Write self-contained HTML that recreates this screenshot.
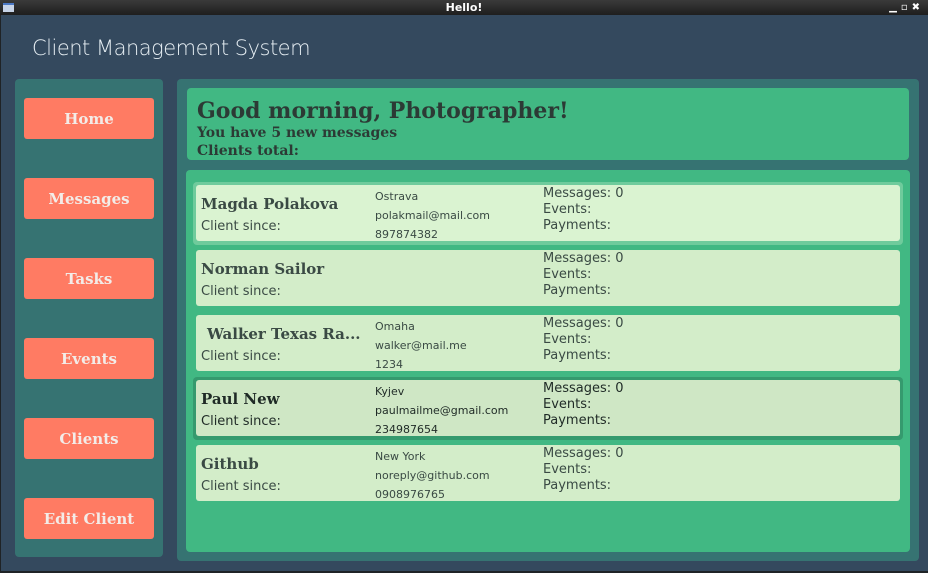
<!DOCTYPE html>
<html><head><meta charset="utf-8"><style>
*{margin:0;padding:0;box-sizing:border-box}
body{width:928px;height:573px;background:#1f2326;position:relative;overflow:hidden;font-family:"DejaVu Sans","Liberation Sans",sans-serif}
.abs{position:absolute}
#tb{left:0;top:0;width:928px;height:15px;background:linear-gradient(#3a3a3a,#1e1e1e);color:#fff;font:bold 11px "DejaVu Sans",sans-serif;text-align:center;line-height:15px}
#win{left:1px;top:15px;width:927px;height:556px;background:#34495e}
#title{left:32px;top:36px;color:#e6eef3;font:21px "DejaVu Sans","Liberation Sans",sans-serif;font-weight:200;letter-spacing:-0.5px}
#side{left:15px;top:79px;width:148px;height:478px;background:#367372;border-radius:4px}
.btn{position:absolute;left:24px;width:130px;height:41px;background:#ff7b63;border-radius:3px;color:#f3ece8;font:bold 15px "DejaVu Serif","Liberation Serif",serif;text-align:center;line-height:43px}
#main{left:177px;top:79px;width:742px;height:482px;background:#367372;border-radius:4px}
#hdr{left:187px;top:88px;width:722px;height:72px;background:#41b883;border-radius:4px;color:#2c3a35;font-family:"DejaVu Serif","Liberation Serif",serif;font-weight:bold}
#list{left:186px;top:170px;width:724px;height:382px;background:#41b883;border-radius:4px}
.card{position:absolute;left:196px;width:704px;height:56px;background:#d3edc9;border-radius:3px;color:#3a4a44}
.card .n{position:absolute;left:5px;top:10px;font:bold 15px "DejaVu Serif","Liberation Serif",serif}
.card .cs{position:absolute;left:5px;top:34px;font-size:13px}
.card .i{position:absolute;left:179px;font-size:11px}
.card .m{position:absolute;left:347px;top:1px;font-size:13px;line-height:16px}
</style></head><body>
<div id="tb" class="abs">Hello!<span style="position:absolute;left:3px;top:3px;width:11px;height:9px;background:#c8d4e8;border-top:2px solid #4b78c4"></span><span style="position:absolute;right:4px;top:0;font-size:10px;letter-spacing:4px">▁▫✖</span></div>
<div id="win" class="abs"></div>
<div id="title" class="abs">Client Management System</div>
<div id="side" class="abs"></div>
<div class="btn" style="top:98px">Home</div>
<div class="btn" style="top:178px">Messages</div>
<div class="btn" style="top:258px">Tasks</div>
<div class="btn" style="top:338px">Events</div>
<div class="btn" style="top:418px">Clients</div>
<div class="btn" style="top:498px">Edit Client</div>
<div id="main" class="abs"></div>
<div id="hdr" class="abs"><div style="position:absolute;left:10px;top:10px;font-size:22px">Good morning, Photographer!</div><div style="position:absolute;left:10px;top:36px;font-size:14px;line-height:18px">You have 5 new messages<br>Clients total:</div></div>
<div id="list" class="abs"></div>
<div class="abs" style="left:193px;top:182px;width:710px;height:63px;background:#6fcb9c;border-radius:4px"></div>
<div class="abs" style="left:193px;top:377px;width:710px;height:63px;background:#359a6e;border-radius:4px"></div>
<div class="card" style="top:185px;background:#daf3d1"><div class="n">Magda Polakova</div><div class="cs">Client since:</div><div class="i" style="top:5px">Ostrava</div><div class="i" style="top:24px">polakmail@mail.com</div><div class="i" style="top:43px">897874382</div><div class="m">Messages: 0<br>Events:<br>Payments:</div></div>
<div class="card" style="top:250px"><div class="n">Norman Sailor</div><div class="cs">Client since:</div><div class="m">Messages: 0<br>Events:<br>Payments:</div></div>
<div class="card" style="top:315px"><div class="n" style="left:11px">Walker Texas Ra...</div><div class="cs">Client since:</div><div class="i" style="top:5px">Omaha</div><div class="i" style="top:24px">walker@mail.me</div><div class="i" style="top:43px">1234</div><div class="m">Messages: 0<br>Events:<br>Payments:</div></div>
<div class="card" style="top:380px;background:#cfe7c5;color:#1f2a26"><div class="n">Paul New</div><div class="cs">Client since:</div><div class="i" style="top:5px">Kyjev</div><div class="i" style="top:24px">paulmailme@gmail.com</div><div class="i" style="top:43px">234987654</div><div class="m">Messages: 0<br>Events:<br>Payments:</div></div>
<div class="card" style="top:445px"><div class="n">Github</div><div class="cs">Client since:</div><div class="i" style="top:5px">New York</div><div class="i" style="top:24px">noreply@github.com</div><div class="i" style="top:43px">0908976765</div><div class="m">Messages: 0<br>Events:<br>Payments:</div></div>
</body></html>
